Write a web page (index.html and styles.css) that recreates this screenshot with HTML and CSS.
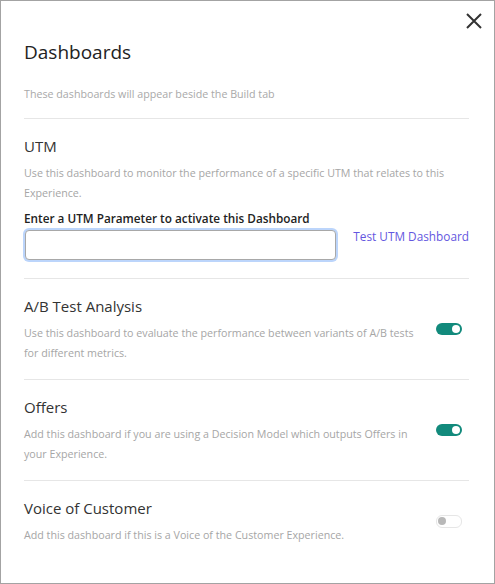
FILE: index.html
```html
<!DOCTYPE html>
<html lang="en">
<head>
<meta charset="utf-8">
<title>Dashboards</title>
<link rel="stylesheet" href="styles.css">
</head>
<body>
<div class="modal">
  <button class="close" aria-label="Close">
    <svg width="16" height="16" viewBox="0 0 16 16"><path d="M1 1 L15 15 M15 1 L1 15" stroke="#333" stroke-width="2" fill="none"/></svg>
  </button>
  <h1 class="title">Dashboards</h1>
  <p class="subtitle">These dashboards will appear beside the Build tab</p>

  <section class="section">
    <div class="text">
      <h2 class="heading">UTM</h2>
      <p class="desc">Use this dashboard to monitor the performance of a specific UTM that relates to this Experience.</p>
      <label class="label" for="utm">Enter a UTM Parameter to activate this Dashboard</label>
      <div class="input-row">
        <input id="utm" class="input" type="text">
        <a class="link" href="#">Test UTM Dashboard</a>
      </div>
    </div>
  </section>

  <section class="section row">
    <div class="text">
      <h2 class="heading">A/B Test Analysis</h2>
      <p class="desc">Use this dashboard to evaluate the performance between variants of A/B tests for different metrics.</p>
    </div>
    <span class="toggle on"><span class="knob"></span></span>
  </section>

  <section class="section row">
    <div class="text">
      <h2 class="heading">Offers</h2>
      <p class="desc">Add this dashboard if you are using a Decision Model which outputs Offers in your Experience.</p>
    </div>
    <span class="toggle on"><span class="knob"></span></span>
  </section>

  <section class="section row last">
    <div class="text">
      <h2 class="heading">Voice of Customer</h2>
      <p class="desc">Add this dashboard if this is a Voice of the Customer Experience.</p>
    </div>
    <span class="toggle off"><span class="knob"></span></span>
  </section>
</div>
</body>
</html>
```

FILE: styles.css
```css
* { box-sizing: border-box; }
html, body { margin: 0; padding: 0; background: #fff; }
body { font-family: "Open Sans", "Noto Sans", sans-serif; }

.modal {
  position: relative;
  width: 495px;
  height: 584px;
  border: 1px solid #a3a3a3;
  padding: 37px 25px 0 23px;
  background: #fff;
}

.close {
  position: absolute;
  top: 11px;
  right: 11px;
  width: 18px;
  height: 18px;
  padding: 1px;
  border: 0;
  background: transparent;
  display: flex;
}

.title {
  margin: 0;
  font-size: 19px;
  line-height: 28px;
  font-weight: 400;
  color: #222;
}

.subtitle {
  margin: 20px 0 0;
  font-size: 10.7px;
  line-height: 16px;
  color: #a9a9a9;
  padding-bottom: 16px;
  border-bottom: 1px solid #e6e6e6;
}

.section {
  padding: 16px 0;
  border-bottom: 1px solid #e6e6e6;
}
.section.last { border-bottom: 0; }

.row {
  display: flex;
  align-items: center;
  gap: 12px;
}
.row .text { flex: 1; }

.heading {
  margin: 0;
  font-size: 15px;
  line-height: 22px;
  font-weight: 400;
  color: #333;
}

.desc {
  margin: 6px 0 0;
  font-size: 10.7px;
  line-height: 20px;
  color: #a6a6a6;
}

.label {
  display: block;
  margin-top: 7px;
  font-size: 11.75px;
  line-height: 16px;
  font-weight: 600;
  color: #222;
}

.input-row {
  display: flex;
  align-items: flex-start;
  justify-content: space-between;
  margin-top: 4px;
  margin-bottom: 2px;
}

.input {
  width: 311px;
  height: 30px;
  margin: 0 0 0 1px;
  border: 1px solid #a8a8a8;
  border-radius: 4px;
  box-shadow: 0 0 0 2px #bcd5fb;
  outline: none;
  font: inherit;
}

.link {
  margin-top: -2px;
  font-size: 11.8px;
  line-height: 16px;
  color: #6457e0;
  text-decoration: none;
}

.toggle {
  position: relative;
  flex: 0 0 auto;
  width: 26px;
  height: 12px;
  margin-right: 7px;
  border-radius: 6px;
  display: flex;
  align-items: center;
}
.toggle.on {
  background: #128a7c;
  justify-content: flex-end;
  padding-right: 2px;
}
.toggle.off {
  height: 13px;
  background: #fff;
  border: 1px solid #e6e6e6;
  padding-left: 1px;
}
.knob {
  width: 8px;
  height: 8px;
  border-radius: 50%;
}
.on .knob { background: #fff; }
.off .knob { background: #b8b8b8; }
```
